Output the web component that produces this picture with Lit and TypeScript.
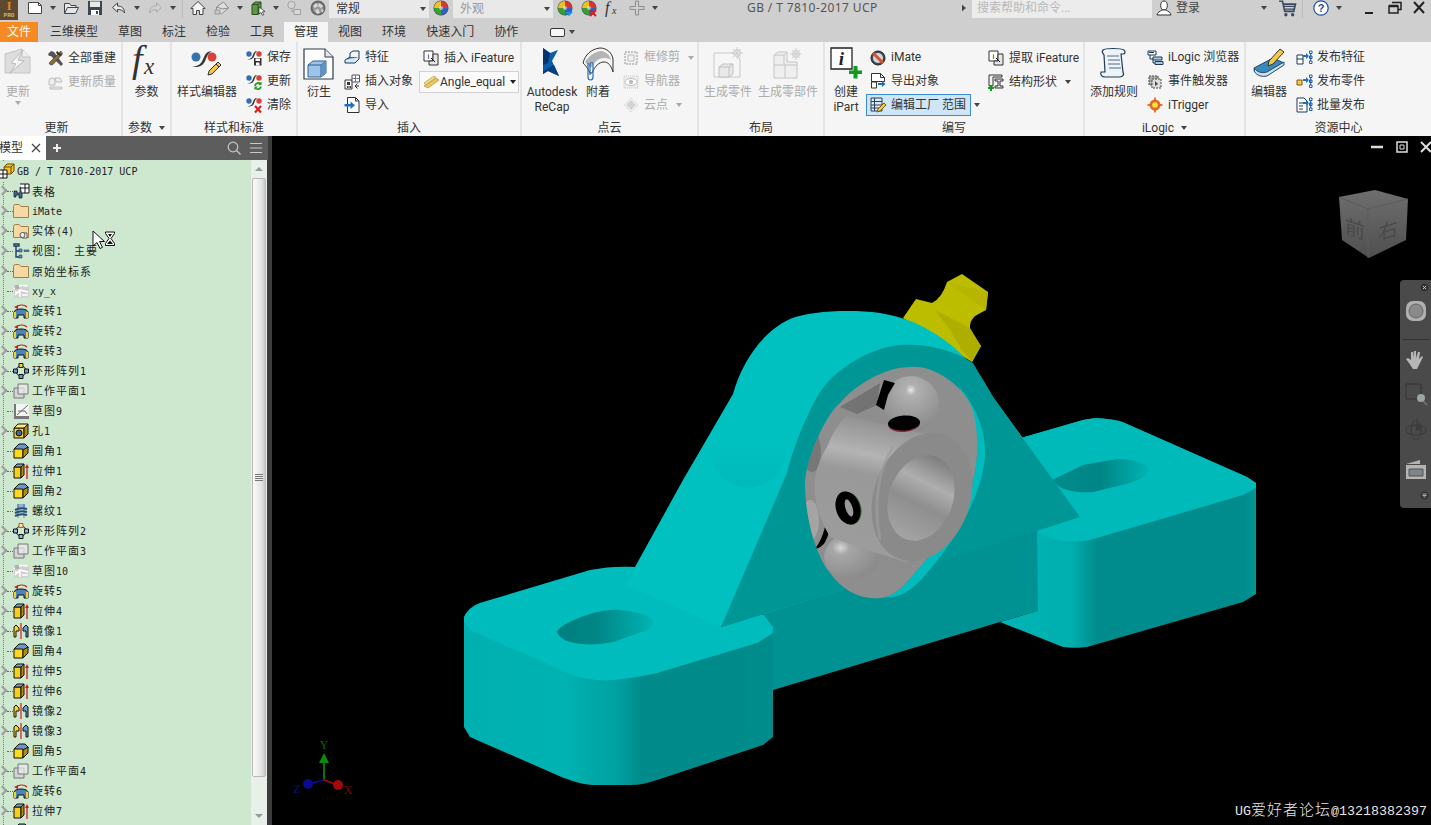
import { LitElement, html, css, svg } from 'lit';
import { customElement } from 'lit/decorators.js';

const ic = (body: unknown, size = 16, vb = 16) =>
  html`<svg class="ic" width=${size} height=${size} viewBox="0 0 ${vb} ${vb}">${body}</svg>`;

// title bar
const tDoc = svg`<path d="M1.500 2.500h10l3 3v8h-13z" fill="#fff" stroke="#444"/><path d="M11.500 2.500v3h3" fill="none" stroke="#444"/>`;
const tOpen = svg`<path d="M1.500 13.500v-10h5l1.500 2h5v2" fill="#e8e8e8" stroke="#444"/><path d="M1.500 13.500l3-6h11l-3 6z" fill="#dfe6ee" stroke="#444"/>`;
const tSave = svg`<path d="M1 1h14v14H1z" fill="#3c4650"/><path d="M3 1.500h10v5.500H3z" fill="#e9e9e9"/><path d="M4 10h8v5H4z" fill="#fff"/><path d="M9 11h2v3H9z" fill="#3c4650"/>`;
const tUndo = svg`<path d="M6.500 3L1.500 7.500l5 4.500V9.500c3.500 0 5.500 1 7 3.500 0-4.500-2.500-7-7-7z" fill="#e9e9e9" stroke="#444"/>`;
const tRedo = svg`<path d="M9.500 3l5 4.500-5 4.500V9.500c-3.500 0-5.500 1-7 3.500 0-4.500 2.500-7 7-7z" fill="#d4d4d4" stroke="#aaa"/>`;
const tHome = svg`<path d="M8 1.500L.8 8.500h2.200v6h3.500v-4h3v4H13v-6h2.200z" fill="#f2f2f2" stroke="#444"/>`;
const tMail = svg`<path d="M2.500 7l7-5 5 6-7 6-5-3z" fill="#ddd" stroke="#8a8a8a"/><path d="M2.500 7l6 2 6-1" fill="none" stroke="#8a8a8a"/><path d="M1 10h5v4H1z" fill="#c8c8c8" stroke="#999"/>`;
const tGreen = svg`<path d="M2 4.500L5 2h6v10l-3 2.500H2z" fill="#5d9a45" stroke="#2c4f22"/><path d="M2 4.500h6V14M8 4.500L11 2" fill="none" stroke="#2c4f22"/><path d="M9 7l6 4.500-2.700.400 1.500 2.800-1.400.7-1.400-2.900L9 14z" fill="#fff" stroke="#222" stroke-width=".7"/>`;
const tCircles = svg`<circle cx="5.500" cy="5" r="3.700" fill="#d4d4d4" stroke="#a0a0a0"/><path d="M8 9.500h6.500v5H8z" fill="#d8d8d8" stroke="#a0a0a0"/><path d="M6 8.500v3h2" fill="none" stroke="#a0a0a0"/>`;
const tBall = svg`<circle cx="8" cy="8" r="7.500" fill="#666"/><circle cx="8" cy="8" r="5.500" fill="#999"/><path d="M3 6l3-3 2 3-3 2zM9 3l4 3-2 2-3-2zM5 10l3-1 2 4-3 1zM11 9l3 1-2 3z" fill="#d8d8d8"/>`;
const tColor = svg`<circle cx="8" cy="8" r="7.500" fill="#444"/><path d="M8 1a7 7 0 0 1 7 7H8z" fill="#d33"/><path d="M15 8a7 7 0 0 1-7 7V8z" fill="#2b62c4"/><path d="M8 15a7 7 0 0 1-7-7h7z" fill="#3a9d3a"/><path d="M1 8a7 7 0 0 1 7-7v7z" fill="#f0c020"/><circle cx="8" cy="8" r="2" fill="#eee" opacity=".6"/>`;
const tPlus = svg`<path d="M6.500 1h3v5.500H15v3H9.500V15h-3V9.500H1v-3h5.500z" fill="#cfcfcf" stroke="#8d8d8d"/>`;
const tUser = svg`<ellipse cx="8" cy="5.500" rx="3.300" ry="4.500" fill="#fff" stroke="#333"/><path d="M1 15c.5-3 3-3.500 5-5h4c2 1.500 4.500 2 5 5z" fill="#fff" stroke="#333"/>`;
const tCart = svg`<path d="M1 2h3l2 9h8l1.500-6.500H4.500" fill="none" stroke="#3b4c60" stroke-width="1.500"/><path d="M5 6.500h10M5.500 9h9" stroke="#3b4c60"/><circle cx="7" cy="14" r="1.500" fill="#3b4c60"/><circle cx="13" cy="14" r="1.500" fill="#3b4c60"/>`;
const tHelp = svg`<circle cx="8" cy="8" r="7.200" fill="#fff" stroke="#1c4f9c" stroke-width="1.200"/><text x="8" y="12" text-anchor="middle" font-size="11" font-weight="700" font-family="Liberation Sans" fill="#1c4f9c">?</text>`;
const tFx = svg`<text x="0" y="13" font-family="Liberation Serif" font-style="italic" font-size="16" fill="#333">f</text><text x="7" y="14" font-family="Liberation Serif" font-style="italic" font-size="10" fill="#333">x</text>`;

// ribbon, large
const rUpdate = svg`<path d="M3 7l17-5 8 8v16H3z" fill="#ddd" stroke="#c4c4c4"/><path d="M20 2v8h8" fill="#eee" stroke="#c4c4c4"/><path d="M21 3L9 16l5 1-6 9 14-12-6-1z" fill="#f4f4f4" stroke="#bbb"/>`;
const rFx = svg`<text x="1" y="25" font-family="Liberation Serif" font-style="italic" font-size="38" fill="#333">f</text><text x="13" y="27" font-family="Liberation Serif" font-style="italic" font-size="23" fill="#333">x</text>`;
const rStyle = svg`<circle cx="5" cy="10" r="4.500" fill="#3573b0"/><circle cx="21" cy="10" r="4.500" fill="#d8403a"/><path d="M1 19c8 1 10-4 12-9 1.500-4 4-6 8-6-4 2-5 5-6.500 9S9 22 1 19z" fill="#333"/><path d="M17 28l1-4 9-9 3 3-9 9z" fill="#f3c64a" stroke="#333"/><path d="M25 17l3 3" stroke="#333"/>`;
const rDerive = svg`<path d="M1 2h21l8 8v22H1z" fill="#fff" stroke="#2c3a48" stroke-width="1.200"/><path d="M22 2v8h8" fill="#e6e6e6" stroke="#2c3a48"/><path d="M5 18l5-4h13v12l-5 4H5z" fill="#9cc3ea" stroke="#2f5f90"/><path d="M5 18h13v12M18 18l5-4" fill="none" stroke="#2f5f90"/><path d="M18 18l5-4v12l-5 4z" fill="#5f93c8"/>`;
const rRecap = svg`<path d="M7 1l7 5 8-3-6 11 7 15-11-5-5 3z" fill="#0b5ea8"/><path d="M7 1l7 5-2 10-5 2z" fill="#04356e"/><path d="M7 24l11-6 5 11-11-5-5 3z" fill="#063f7d"/>`;
const rAttach = svg`<path d="M1 16C3 8 9 2 18 1c7 0 12 5 13 11v13c-2-7-5-10-9-10-5 0-9 4-12 11H8C6 21 3 18 1 16z" fill="#f5f5f5" stroke="#333"/><path d="M3 15c4-6 10-11 17-11 4 1 8 4 9 9-3-2-5-2-8-2-6 1-9 5-12 10z" fill="#999" opacity=".7"/><path d="M6 16v14c0 4 5 4 5 0V17c0-2-3-2-3 0v11" fill="none" stroke="#2c6cb0" stroke-width="1.200"/>`;
const rGenPart = svg`<path d="M2 6h20l6 6v18H2z" fill="#f6f6f6" stroke="#c8c8c8"/><path d="M7 20l4-3h10v10l-4 3H7z" fill="#e9e9e9" stroke="#c0c0c0"/><path d="M7 20h10v10M17 20l4-3" fill="none" stroke="#c0c0c0"/><circle cx="25" cy="6" r="3.500" fill="#eee" stroke="#c8c8c8"/><path d="M25 0v12M19 6h12M21 2l8 8M29 2l-8 8" stroke="#d0d0d0"/>`;
const rGenComp = svg`<path d="M2 8l4-3h9v10h10v16H2z" fill="#efefef" stroke="#c4c4c4"/><path d="M2 8h10v10M2 18h11v13M13 18h12M12 8l3-3" fill="none" stroke="#c4c4c4"/><circle cx="24" cy="7" r="3.500" fill="#eee" stroke="#c8c8c8"/><path d="M24 1v12M18 7h12M20 3l8 8M28 3l-8 8" stroke="#d0d0d0"/>`;
const rIPart = svg`<path d="M1 1h21v21H1z" fill="#fff" stroke="#222" stroke-width="1.300"/><text x="11.500" y="18" text-anchor="middle" font-family="Liberation Serif" font-style="italic" font-weight="700" font-size="19" fill="#222">i</text><path d="M23.500 19h4v4.500H32v3.500h-4.500v4.500h-4V27H19v-3.500h4.500z" fill="#0d9a1e"/>`;
const rScroll = svg`<path d="M5 3c2-2 18-2 21 0 2 2 1 4-1 4h-2l2 18c2 4-2 5-4 5H7c-3 0-5-2-4-5h4L6 8C5 6 3 5 5 3z" fill="#eef3f7" stroke="#1f3c58" stroke-width="1.200"/><path d="M9 9h12M10 13h12M10 17h12M11 21h12" stroke="#4d6a85"/>`;
const rBook = svg`<path d="M1 21L20 11l11 5-17 12H8c-4 0-7-3-7-7z" fill="#3a89bb" stroke="#1e4a68"/><path d="M2 22c3 4 8 4 12 3l17-10v3L14 29c-5 1-10 0-13-5z" fill="#cfe0ea" stroke="#1e4a68"/><path d="M15 19l1-5L27 2l4 3-11 12z" fill="#f2c94c" stroke="#333"/>`;

// ribbon, small
const styleBase = svg`<circle cx="3" cy="4" r="2.700" fill="#2f6eb0"/><circle cx="13" cy="4" r="2.700" fill="#d8403a"/><path d="M1 9c5 .5 5.500-3 6.500-5.500C8.300 1.500 10 1 11 1c-2 1.500-2 3-3 5.500C7 9 4 10 1 9z" fill="#333"/>`;
const sSave = svg`${styleBase}<path d="M8 8h7.500v7.500H8z" fill="#333"/><path d="M9.500 8.500h4.500v2.500H9.500zM10 12.500h3.500v3H10z" fill="#fff"/>`;
const sRefresh = svg`${styleBase}<path d="M9 12a3.500 3.500 0 0 1 6-2M15 12.500a3.500 3.500 0 0 1-6 1.500" fill="none" stroke="#2a9a2a" stroke-width="1.700"/><path d="M15.500 7.500v3.500h-3.500zM8.500 16v-3.500H12z" fill="#2a9a2a"/>`;
const sClear = svg`${styleBase}<path d="M9 9l6 6.500M15 9l-6 6.500" stroke="#d81f1f" stroke-width="2.200"/>`;
const sTools = svg`<path d="M1 4l3-3 3 1 9 12-2 2L4 6 2 6z" fill="#555"/><path d="M14 1l1.500 3L6 14.500 3.500 15 2 13l9-9z" fill="#8a6a3a" stroke="#333" stroke-width=".6"/><path d="M10 1l5 4-2 1-4-3z" fill="#333"/>`;
const sScale = svg`<path d="M2 7a3 3 0 0 1 6 0v4H2z" fill="#eee" stroke="#bcbcbc"/><path d="M8 4h5l2 4H9zM3 13h12v2H3z" fill="#eee" stroke="#bcbcbc"/>`;
const sFeature = svg`<path d="M1 10l5-3h9l-4 4H2z" fill="#5b9dd0" stroke="#153d60"/><path d="M1 10v3h10l4-4V7" fill="#dbe8f2" stroke="#153d60"/><path d="M6 7V3l3-2h6v6" fill="#f4f4f4" stroke="#153d60"/>`;
const sObject = svg`<path d="M1 6h7v9H1z" fill="#fff" stroke="#333"/><path d="M3 8h3v3H3zM3 12h1.500v2H3zM5.500 12H7v2H5.500z" fill="#333"/><path d="M8 1h7.500v7H8z" fill="#fff" stroke="#555"/><path d="M8 4.500h7.500M11.500 1v7" stroke="#777"/><path d="M11 12h4M13.500 9.500L11 12l2.500 2.500" fill="none" stroke="#333"/>`;
const sImport = svg`<path d="M3.500.500h8l3.500 3.500v11.500H3.500z" fill="#fff" stroke="#333"/><path d="M11.500.500v3.500H15" fill="none" stroke="#333"/><path d="M.500 7h6V4.500l4.500 3.800-4.500 3.700V9.500h-6z" fill="#1d6fc2"/>`;
const sIFeat = svg`<path d="M1 1h9v10H1z" fill="#fff" stroke="#333"/><text x="5.500" y="8.500" text-anchor="middle" font-family="Liberation Sans" font-size="8" fill="#222">i</text><path d="M10 4h5v11H6v-4h4z" fill="#e6e6e6" stroke="#333"/><path d="M8 8l4 4" stroke="#111"/>`;
const sAngle = svg`<path d="M1 12L13 4l3 2L5 14z" fill="#e9c75c" stroke="#b8912c" stroke-width=".7"/><path d="M1 9L11 2l2 1.500L3 11z" fill="#f3dd8c" stroke="#b8912c" stroke-width=".7"/>`;
const sCrop = svg`<path d="M2 2h12v12H2z" fill="#f1f1f1" stroke="#c4c4c4" stroke-dasharray="2 1" stroke-width="2"/><path d="M5 5h6v6H5z" fill="none" stroke="#bcbcbc"/>`;
const sNav = svg`<path d="M1 2h14v12H1z" fill="#ececec" stroke="#c8c8c8" stroke-dasharray="1 1"/><ellipse cx="8" cy="8" rx="6" ry="3.500" fill="#fff" stroke="#bdbdbd"/><circle cx="8" cy="8" r="2.200" fill="#bdbdbd"/>`;
const sCloud = svg`<path d="M8 1l7 7-7 7-7-7z" fill="#ececec" stroke="#d0d0d0" stroke-dasharray="1 1"/><path d="M8 4l4 4-4 4-4-4z" fill="#d4d4d4" stroke="#bdbdbd" stroke-dasharray="1 1"/>`;
const sIMate = svg`<circle cx="8" cy="8" r="7" fill="#3d4b57" stroke="#222"/><circle cx="8" cy="8" r="5" fill="#cfd6dc"/><path d="M3 3l10 10" stroke="#d8502c" stroke-width="3"/>`;
const sExport = svg`<path d="M1.500.500h9l4 4v4h-13z" fill="#fff" stroke="#333"/><path d="M10.500.500v4h4" fill="none" stroke="#333"/><path d="M1.500 9h5v6h-5z" fill="#fff" stroke="#333"/><path d="M8 10h4V8l3.500 3-3.500 3v-2H8z" fill="#1d6fc2"/>`;
const sFactory = svg`<path d="M1 1h11v13H1z" fill="#dfe9f3" stroke="#263f5a"/><path d="M1 4.500h11M1 8h11M1 11h11M4.500 1v13" stroke="#263f5a"/><path d="M7 15l1-3 6-6 2 2-6 6z" fill="#f2c94c" stroke="#7a5a10"/>`;
const sStruct = svg`<path d="M1 1h13v2H5v9H1z" fill="#f0f0f0" stroke="#333"/><path d="M7 5h8v2h-3v5h3v2H7v-2h3V7H7z" fill="#e4e4e4" stroke="#333"/><path d="M0 13h2v-2h2v2h2v2H4v2H2v-2H0z" fill="#0d9a1e"/>`;
const sLogicB = svg`<path d="M1 1h8v4H1z" fill="#fff" stroke="#1c3b5a"/><path d="M3 5v4h3v4h2" fill="none" stroke="#1c3b5a"/><path d="M6 7h9v3H6zM8 11.500h8v3H8z" fill="#a9cbe7" stroke="#1c3b5a"/><path d="M2 2.500h5" stroke="#1c3b5a"/>`;
const sEvent = svg`<path d="M2 2h9v9H2z" fill="#aaa" stroke="#444" stroke-dasharray="2 1"/><path d="M5 5h9v9H5z" fill="#ddd" stroke="#444" stroke-dasharray="2 1"/><path d="M8 7v5l3-2z" fill="#444"/>`;
const sTrigger = svg`<circle cx="8" cy="8" r="5.500" fill="#e86a1d"/><circle cx="8" cy="8" r="2.800" fill="#ffe14a"/><path d="M8 .500v3M8 12.500v3M.500 8h3M12.500 8h3" stroke="#c8561a" stroke-width="1.500"/>`;
const pubPart = (left: unknown) => svg`${left}<path d="M7 5h3V3l3 3-3 3V7H7z" fill="#1d6fc2"/><path d="M13.500 1h2.500v2.500h-2.500zM13.500 6h2.500v2.500h-2.500zM13.500 11h2.500v2.500h-2.500z" fill="#fff" stroke="#1d5ea8"/><path d="M14.700 3.500V11" stroke="#1d5ea8"/>`;
const sPubF = pubPart(svg`<path d="M1 5h6v9H1z" fill="#fff" stroke="#1c3b5a"/><path d="M1 9h6" stroke="#1c3b5a"/>`);
const sPubP = pubPart(svg`<path d="M1 6h5v5H1z" fill="#f2c94c" stroke="#7a5a10"/>`);
const sPubB = pubPart(svg`<path d="M1 1h7l3 3v11H1z" fill="#fff" stroke="#1c3b5a"/><path d="M3 6h4M3 9h4M3 12h4" stroke="#1c3b5a"/>`);

// tree
const yFace = svg`<path d="M1 5h10v10H1z" fill="#f7d52a" stroke="#111"/><path d="M1 5l4-4h10l-4 4z" fill="#ffe98a" stroke="#111"/><path d="M11 5l4-4v10l-4 4z" fill="#a98a10" stroke="#111"/>`;
const nRoot = svg`<path d="M5 4l3-3h7v7l-3 3H5z" fill="#f4c430" stroke="#6b4a00"/><path d="M5 4h7v7M12 4l3-3" fill="none" stroke="#6b4a00"/><path d="M0 7h8v8H0z" fill="#fff" stroke="#111"/><path d="M0 11h8M4 7v8" stroke="#111"/>`;
const nTable = svg`<path d="M1 8h3v2h3V4h2v11H6v-3H3v2H1z" fill="#3b6a99" stroke="#111" stroke-width=".7"/><path d="M7 1h9v9H9" fill="#fff" stroke="#111"/><path d="M12 1v9M7 5h9" stroke="#111"/>`;
const nFolder = svg`<path d="M.500 3.500q0-2 2-2h3.500l2 2h7q.500 0 .500 .500v10.500H.500z" fill="#f6d8a5" stroke="#a67c3f"/>`;
const nFolderS = svg`${nFolder}<path d="M9 10h5v5H9z" fill="#fff" stroke="#555"/><circle cx="9.500" cy="12" r="2.500" fill="#eee" stroke="#555"/>`;
const nView = svg`<path d="M1 1h5v2H1zM3 3v11h4M3 8h4" fill="none" stroke="#1a3d63" stroke-width="1.400"/><path d="M6 6h3v3H6zM6 12h3v3H6zM11 7h5v1.500h-5z" fill="#5a8fc0" stroke="#1a3d63" stroke-width=".6"/>`;
const nSketchG = svg`<path d="M1 2h15v13H1z" fill="#d0d0d0"/><path d="M1 6c4-4 8-4 14-3M2 12l5-5 8 2M2 9h5v5M9 12h6" fill="none" stroke="#fff" stroke-width="1.600"/><path d="M2 2h4v4H2z" fill="#b0b0b0"/>`;
const nRev = svg`<path d="M3 4.500C5 1.500 11 1 14 4" fill="none" stroke="#d61818" stroke-width="1.200"/><path d="M1 4l4-2v4z" fill="#d61818"/><path d="M1 10c0-3 3-4 7-4s7 1 7 4v5h-4v-3H5v3H1z" fill="#4f82b8" stroke="#111"/><path d="M13 9h2v6h-2zM1 9h2v6H1z" fill="#f0d030"/>`;
const nPattern = svg`<circle cx="8" cy="8" r="5" fill="none" stroke="#111"/><path d="M6 0.500h4v4H6z" fill="#f5d430" stroke="#111"/><path d="M0.500 6h4v4h-4zM11.500 6h4v4h-4zM6 11.500h4v4H6z" fill="#6b9bcc" stroke="#111"/>`;
const nPattern2 = svg`<circle cx="8" cy="8" r="5" fill="none" stroke="#111"/><path d="M6 0.500h4v4H6z" fill="#f6e3c0" stroke="#c05a10"/><path d="M0.500 6h4v4h-4zM11.500 6h4v4h-4zM6 11.500h4v4H6z" fill="#8fb6dc" stroke="#111"/>`;
const nPlane = svg`<path d="M1 5h10v10H1z" fill="#d4d4d4" stroke="#777"/><path d="M5 1h10v10H5z" fill="#ebebeb" fill-opacity=".7" stroke="#777"/>`;
const nSketch = svg`<path d="M1 1h15v14H1z" fill="#f4f4f4"/><path d="M1 13h15v3H1z" fill="#777"/><path d="M1 1h2v15H1z" fill="#777"/><path d="M4 12l11-10M5 8h7l2 3" fill="none" stroke="#666"/>`;
const nHole = svg`${yFace}<circle cx="6" cy="10" r="3" fill="#3b6a99" stroke="#111"/>`;
const nFillet = svg`<path d="M1 6l5-5h6l3 3v1l-5 2z" fill="#6f97c4" stroke="#111"/><path d="M1 6h9v9H1z" fill="#ffd91f" stroke="#111"/><path d="M10 7l5-3v6l-5 5z" fill="#b08f10" stroke="#111"/>`;
const nExtrude = svg`<path d="M1 4h7v11H1z" fill="#f7cd1e" stroke="#111"/><path d="M1 4l3-3h7L8 4z" fill="#7ca3cc" stroke="#111"/><path d="M8 4l3-3v11l-3 3z" fill="#b08f10" stroke="#111"/><path d="M14 16V4" stroke="#d61818" stroke-width="1.300"/><path d="M12 5l2-4 2 4z" fill="#d61818"/>`;
const nThread = svg`<path d="M4 1h8v5H4z" fill="#8fb1d0"/><path d="M2 7c4-2 8-2 12-1M2 10c4-2 8-2 12-1M2 13c4-2 8-2 12-1" fill="none" stroke="#1f4f80" stroke-width="2"/><path d="M5 1v14M11 1v14" stroke="#33475c" stroke-width=".6"/>`;
const nMirror = svg`<path d="M1 14V4l2-2 3 3v3H3v6z" fill="#f7d52a" stroke="#111"/><path d="M15 14V4l-2-2-3 3v3h3v6z" fill="#6b9bcc" stroke="#111"/><path d="M8 0v16" stroke="#d61818" stroke-width="1.200"/>`;

type Row = [typeof nFolder, string, boolean];
const rows: Row[] = [
  [nTable, '表格', true], [nFolder, 'iMate', true], [nFolderS, '实体(4)', true], [nView, '视图： 主要', true],
  [nFolder, '原始坐标系', true], [nSketchG, 'xy_x', false], [nRev, '旋转1', true], [nRev, '旋转2', true], [nRev, '旋转3', true],
  [nPattern, '环形阵列1', true], [nPlane, '工作平面1', true], [nSketch, '草图9', false], [nHole, '孔1', true],
  [nFillet, '圆角1', false], [nExtrude, '拉伸1', true], [nFillet, '圆角2', false], [nThread, '螺纹1', false],
  [nPattern2, '环形阵列2', true], [nPlane, '工作平面3', true], [nSketchG, '草图10', false], [nRev, '旋转5', true],
  [nExtrude, '拉伸4', true], [nMirror, '镜像1', true], [nFillet, '圆角4', false], [nExtrude, '拉伸5', true],
  [nExtrude, '拉伸6', true], [nMirror, '镜像2', true], [nMirror, '镜像3', true], [nFillet, '圆角5', false],
  [nPlane, '工作平面4', true], [nRev, '旋转6', true], [nExtrude, '拉伸7', true], [nFillet, '', false],
];

// latin runs use the narrower mono size, the rest stays CJK width
const runs = (s: string) => s.split(/([\x00-\x7f]+)/).map((p, i) => (i % 2 ? html`<span class="lat">${p}</span>` : p));

const big = (icon: unknown, lines: string[], cls: string, arrow = false) => html`<div class="big ${cls}">
  <div class="bigicon">${ic(icon, 32, 32)}</div>
  ${lines.map(l => html`<div class="bigtext">${l}</div>`)}
  ${arrow ? html`<i class="dd bigdd"></i>` : ''}
</div>`;

const small = (icon: unknown, label: string, cls = '', arrow = false) => html`<div class="row ${cls}">
  ${ic(icon)}<span>${label}</span>${arrow ? html`<i class="dd"></i>` : ''}
</div>`;

const panel = (cls: string, label: unknown, body: unknown) => html`<section class="panel ${cls}">
  <div class="body">${body}</div>
  <div class="label">${label}</div>
</section>`;

const silhouette = 'M805 483C806 460 825 415 840 403 855 385 885 367 910 367 935 365 960 385 970 403 978 420 980 455 973 480 965 510 945 540 920 567 905 585 895 597 880 598 860 600 842 590 830 573 815 555 805 515 805 483z';

const model = svg`
  <defs>
    <linearGradient id="fl" gradientUnits="userSpaceOnUse" x1="464" x2="773" y1="0" y2="0">
      <stop offset="0" stop-color="#00b0b0"/><stop offset=".33" stop-color="#00b2b2"/><stop offset=".5" stop-color="#00a0a0"/><stop offset=".58" stop-color="#008a8a"/><stop offset="1" stop-color="#008c8c"/>
    </linearGradient>
    <linearGradient id="fr" gradientUnits="userSpaceOnUse" x1="1037" x2="1256" y1="0" y2="0">
      <stop offset="0" stop-color="#00b2b2"/><stop offset=".16" stop-color="#00aeae"/><stop offset=".27" stop-color="#008c8c"/><stop offset=".95" stop-color="#008c8c"/><stop offset="1" stop-color="#009898"/>
    </linearGradient>
    <linearGradient id="h1" gradientUnits="userSpaceOnUse" x1="557" x2="653" y1="0" y2="0">
      <stop offset="0" stop-color="#007f7f"/><stop offset=".4" stop-color="#008585"/><stop offset="1" stop-color="#00b4b4"/>
    </linearGradient>
    <linearGradient id="h2" gradientUnits="userSpaceOnUse" x1="1052" x2="1149" y1="0" y2="0">
      <stop offset="0" stop-color="#008c8c"/><stop offset=".5" stop-color="#008585"/><stop offset="1" stop-color="#00b4b4"/>
    </linearGradient>
    <linearGradient id="fillet" x1="0" y1="0" x2="0" y2="1">
      <stop offset=".4" stop-color="#00c0c0"/><stop offset="1" stop-color="#00baba"/>
    </linearGradient>
    <linearGradient id="cyl" gradientUnits="userSpaceOnUse" x1="856" y1="412" x2="830" y2="540">
      <stop offset="0" stop-color="#8e8e8e"/><stop offset=".2" stop-color="#a6a6a6"/><stop offset=".3" stop-color="#b4b4b4"/><stop offset=".45" stop-color="#999"/><stop offset="1" stop-color="#9c9c9c"/>
    </linearGradient>
    <linearGradient id="bore" gradientUnits="userSpaceOnUse" x1="925" y1="455" x2="915" y2="545">
      <stop offset="0" stop-color="#7e7e7e"/><stop offset=".3" stop-color="#aeaeae"/><stop offset=".55" stop-color="#8e8e8e"/><stop offset="1" stop-color="#a6a6a6"/>
    </linearGradient>
    <radialGradient id="ball" cx=".5" cy=".25" r=".7">
      <stop offset="0" stop-color="#e8e8e8"/><stop offset=".14" stop-color="#b0b0b0"/><stop offset="1" stop-color="#8c8c8c"/>
    </radialGradient>
    <radialGradient id="ball2" cx=".3" cy=".3" r=".7">
      <stop offset="0" stop-color="#d8d8d8"/><stop offset=".22" stop-color="#a6a6a6"/><stop offset="1" stop-color="#8c8c8c"/>
    </radialGradient>
    <clipPath id="holeclip"><path d=${silhouette}/></clipPath>
  </defs>

  <path d="M903 318L916 299 932 303Q942 298 947 282L962 274 988 292 986 310 975 316Q966 325 973 335L981 346 972 362 945 345z" fill="#bdbd00"/>
  <path d="M947 282L988 292 986 310 972 300z" fill="#b6b600"/>
  <path d="M935 310L970 328 981 346 972 362 962 350 950 330z" fill="#aeae00"/>

  <path d="M1021 438L1083 420C1092 418 1100 418 1107 419 1115 420 1121 421 1127 424L1247 477 1256 483 1256 594 1243 602 1087 647C1080 648 1070 648 1063 647L1000 622 1037 611 1037 531z" fill="url(#fr)"/>
  <path d="M1021 438L1083 420C1092 418 1100 418 1107 419 1115 420 1121 421 1127 424L1247 477 1256 483 1256 488 1243 495 1090 540C1080 542 1070 542 1063 541 1055 540 1045 537 1037 531L1000 470z" fill="#00baba"/>
  <path d="M1052 480L1083 465 1117 459C1135 459 1149 464 1149 471 1145 477 1138 480 1130 483L1093 492C1080 493 1060 492 1052 480z" fill="url(#h2)"/>

  <path d="M763 610L1037 527 1038 611 1000 622 773 690z" fill="#009292"/>

  <path d="M464 619L773 630 773 737 763 745 657 780C648 783 640 785 630 785L593 785C585 785 570 781 557 775L470 737 464 727z" fill="url(#fl)"/>
  <path d="M464 617C468 608 476 604 483 602L590 570C605 567 620 566 635 567L700 600 721 627 763 614 773 627 773 633 757 643 657 673C645 676 630 678 613 680 605 681 590 680 580 677 575 676 565 673 557 668L470 630 464 622z" fill="#00bcbc"/>
  <path d="M557 632C560 625 575 619 593 613 605 610 615 609 620 610 640 612 653 616 653 622 653 626 650 628 647 630L613 642C603 644 590 645 583 644 570 643 560 640 557 632z" fill="url(#h1)"/>

  <path d="M635 567L683 480 733 394C742 362 762 332 790 319 810 311 850 309 880 313 892 315 903 318 913 322 947 337 970 360 983 380L993 397 1080 517 721 627 626 585z" fill="#00c0c0"/>
  <ellipse cx="748" cy="450" rx="38" ry="38" fill="url(#fillet)"/>
  <path d="M721 627L787 473C795 440 815 395 827 383 845 363 875 347 900 345 925 343 955 350 973 363L993 397 1080 517 1037 531 763 614z" fill="#009696"/>

  <path d="M958 385C975 405 986 430 985 453 984 490 960 535 927 573 915 587 905 595 893 597L880 598C895 597 905 585 920 567 945 540 965 510 973 480 980 455 978 420 958 385z" fill="#00bcbc"/>
  <path d=${silhouette} fill="#8e8e8e"/>
  <g clip-path="url(#holeclip)">
    <path d="M840 407L880 383 877 405 857 414z" fill="#737373"/>
    <circle cx="911" cy="404" r="28" fill="url(#ball)"/>
    <ellipse cx="852" cy="557" rx="28" ry="23" fill="url(#ball2)"/>
    <ellipse cx="812" cy="452" rx="9" ry="20" fill="#777"/>
    <ellipse cx="810" cy="520" rx="9" ry="20" fill="#a4a4a4"/>
    <path d="M884 380L895 383 888 395 884 410 876 405z" fill="#000"/>
    <path d="M825 527C830 528 830 532 826 540 824 545 820 548 815 549 820 542 823 535 825 527z" fill="#000"/>
    <path d="M815 480C816 470 820 458 827 447 832 435 838 422 848 416L940 437 907 562 877 553 830 537C820 520 813 500 815 480z" fill="url(#cyl)"/>
  </g>
  <ellipse cx="922" cy="497" rx="48" ry="66" transform="rotate(20 922 497)" fill="#8a8a8a"/>
  <path d="M893 447C878 470 873 505 880 540" fill="none" stroke="#9c9c9c" stroke-width="3" opacity=".7"/>
  <ellipse cx="921" cy="498" rx="32" ry="44" transform="rotate(20 921 498)" fill="url(#bore)"/>
  <ellipse cx="904" cy="424" rx="16" ry="8" transform="rotate(-4 904 424)" fill="#7c2a3c"/>
  <ellipse cx="904" cy="423" rx="16" ry="7.500" transform="rotate(-4 904 423)" fill="#000"/>
  <ellipse cx="849" cy="508" rx="12" ry="17" transform="rotate(-18 849 508)" fill="#3a6a3a"/>
  <ellipse cx="848" cy="508" rx="12" ry="17" transform="rotate(-18 848 508)" fill="#000"/>
  <ellipse cx="849" cy="508" rx="3.500" ry="9" transform="rotate(-18 849 508)" fill="#9a9a9a"/>

  <path d="M324 780V762" stroke="#0c9a0c" stroke-width="1.500"/>
  <path d="M319 763h10l-5-10z" fill="#0c8a0c"/>
  <path d="M324 780l-16 4" stroke="#0a0a9a" stroke-width="1.500"/>
  <circle cx="308" cy="784" r="5" fill="#0a0a90"/>
  <path d="M324 780l14 5" stroke="#a00a0a" stroke-width="1.500"/>
  <circle cx="338" cy="785" r="5" fill="#a00a0a"/>
  <text x="324" y="749" text-anchor="middle" class="axis" fill="#0a6a0a">Y</text>
  <text x="297" y="793" text-anchor="middle" class="axis" fill="#0a0a80">Z</text>
  <text x="348" y="794" text-anchor="middle" class="axis" fill="#7a0a0a">X</text>
`;

@customElement('app-root')
export class AppRoot extends LitElement {
  static styles = css`
    :host {
      display: block;
      width: 1431px;
      height: 825px;
      overflow: hidden;
      background: #000;
      font: 12px/15px Roboto, 'Noto Sans CJK SC', sans-serif;
      color: #333;
    }
    .ic { display: block; flex: none; overflow: visible; }
    .dd {
      display: inline-block;
      flex: none;
      width: 0;
      height: 0;
      border: 3.500px solid transparent;
      border-top: 4px solid #444;
      border-bottom: 0;
    }

    .titlebar { display: flex; align-items: flex-start; height: 22px; background: #cfcfcf; }
    .logo {
      width: 18px; height: 20px; margin-right: 5px; background: #5c4a30; color: #e8861a;
      display: flex; flex-direction: column; align-items: center; overflow: hidden; flex: none;
      font: 700 12px/12px 'Liberation Serif', serif;
    }
    .logo small { font: 700 6px/7px 'Liberation Mono', monospace; color: #c9b48a; }
    .b { width: 24px; height: 16px; display: flex; align-items: center; justify-content: center; flex: none; }
    .d { width: 12px; height: 16px; display: flex; align-items: center; justify-content: center; flex: none; }
    .tsep { width: 7px; height: 18px; flex: none; display: flex; justify-content: center; }
    .tsep::after { content: ''; width: 1px; background: #bcbcbc; }
    .sel {
      flex: none; height: 18px; background: #e9e9e9; display: flex; align-items: center;
      justify-content: space-between; padding: 0 3px 0 7px; box-sizing: border-box; width: 100px; margin-left: -1px;
    }
    .sel.appearance { margin-left: 0; color: #9a9a9a; }
    .title {
      width: 213px; padding-left: 86px; flex: none; color: #555; white-space: nowrap;
      font-family: 'Noto Sans', sans-serif; letter-spacing: .4px; line-height: 16px;
    }
    .search { width: 180px; height: 18px; flex: none; background: #ececec; color: #b8b8b8; line-height: 17px; padding-left: 5px; box-sizing: border-box; }
    .login { width: 82px; flex: none; color: #444; line-height: 16px; }
    .cart { margin-left: 5px; }
    .help { margin-left: 3px; }
    .win { margin-left: auto; display: flex; }

    .tabs { display: flex; height: 20px; background: #cfcfcf; line-height: 21px; }
    .tab { padding: 0 10px; }
    .tab.file { width: 38px; padding: 0; margin-right: 2px; text-align: center; background: #f58a24; color: #fff; }
    .tab.on { background: #f5f5f5; }
    .tabdd { margin-left: 22px; display: flex; align-items: center; gap: 4px; }
    .pill { width: 13px; height: 7px; border: 1px solid #333; border-radius: 2px; background: #f5f5f5; }

    .ribbon {
      display: grid; height: 94px; background: #f5f5f5;
      grid-template-columns: 123px 49px 126px 224px 177px 126px 260px 161px 1fr;
    }
    .panel { display: flex; flex-direction: column; box-sizing: border-box; border-right: 2px solid #e4e4e4; }
    .panel:last-child { border-right: 0; }
    .body { height: 75px; padding-top: 4px; box-sizing: border-box; display: flex; }
    .label { height: 19px; padding-top: 3px; box-sizing: border-box; line-height: 16px; text-align: center; display: flex; justify-content: center; align-items: center; gap: 7px; }
    .p1 .body { gap: 11px; }
    .p1 .label { padding-right: 8px; }
    .p2 .body { justify-content: center; }
    .p3 .body, .p4 .body, .p8 .body, .p9 .body { padding-left: 5px; gap: 9px; }
    .p4 .col.c66 { width: 66px; }
    .p5 .body { padding-left: 5px; gap: 3px; }
    .p5 .col { margin-left: 4px; }
    .p6 .body { padding-left: 5px; gap: 6px; }
    .p7 .body { padding-left: 6px; gap: 5px; }

    .big { display: flex; flex-direction: column; align-items: center; flex: none; white-space: nowrap; padding-top: 1px; }
    .bigicon { height: 38px; display: flex; justify-content: center; }
    .bigtext { line-height: 15px; }
    .bigdd { margin-top: 1px; }
    .w30 { width: 30px; } .w32 { width: 32px; } .w36 { width: 36px; }
    .w48 { width: 48px; } .w50 { width: 50px; } .w60 { width: 60px; }
    .off { color: #ababab; }
    .off .dd { border-top-color: #aaa; }

    .col { display: flex; flex-direction: column; flex: none; }
    .col.c117 { width: 117px; }
    .row { height: 24px; display: flex; align-items: center; gap: 5px; white-space: nowrap; }
    .row.ind { padding-left: 4px; }
    .row .dd { margin-left: 3px; }
    .combo {
      width: 100px; height: 22px; margin: 1px 0; box-sizing: border-box; background: #fafafa; border: 1px solid #d2d2d2;
      display: flex; align-items: center; gap: 1px; padding-left: 3px; white-space: nowrap;
    }
    .combo .dd { margin-left: 4px; border-top-color: #222; }
    .hlwrap { display: flex; align-items: center; gap: 3px; }
    .hl {
      width: 105px; height: 22px; margin: 1px 0; box-sizing: border-box; padding-left: 3px;
      background: #cfe5f8; border: 1px solid #3a8ad6;
    }

    .main { display: flex; height: 689px; }
    .browser { width: 272px; flex: none; display: flex; flex-direction: column; position: relative; background: #3c3c3c; overflow: hidden; }
    .bhead { height: 24px; width: 268px; flex: none; background: #5d5d5d; display: flex; align-items: center; padding-right: 1px; box-sizing: border-box; }
    .btab { width: 46px; height: 24px; background: #fff; display: flex; align-items: center; overflow: hidden; flex: none; }
    .btab span { margin-left: -1px; width: 29px; flex: none; color: #333; }
    .bsearch { margin-left: auto; }
    .bhead .b { width: 22px; }
    .tree { flex: 1; width: 267px; display: flex; background: #cde8cf; min-height: 0; }
    .list {
      flex: 1; overflow: hidden; padding-top: 1px; color: #222;
      font: 11px/20px 'Noto Sans CJK SC', sans-serif; letter-spacing: 1px;
      background-image: linear-gradient(#777 50%, transparent 50%);
      background-size: 1px 2px; background-repeat: repeat-y; background-position: 3px 0;
    }
    .lat { font: 10px/20px 'DejaVu Sans Mono', monospace; letter-spacing: 0; }
    .node { height: 20px; display: flex; align-items: center; white-space: nowrap; }
    .node .label-t { margin-left: 3px; }
    .node.root { background: #cde8cf; }
    .node.root .ic { margin-left: -1px; }
    .node.root .label-t { margin-left: 2px; }
    .hook { width: 13px; flex: none; height: 20px; position: relative; display: flex; align-items: center; }
    .hook::after { content: ''; width: 6px; margin-left: 7px; border-top: 1px dotted #666; }
    .chev {
      position: absolute; left: -1px; top: 6px; width: 5px; height: 5px;
      border: solid #9c9c9c; border-width: 2px 2px 0 0; transform: rotate(45deg); background: #cde8cf;
    }
    .sb { width: 16px; flex: none; background: #e9efe9; display: flex; flex-direction: column; align-items: center; }
    .sbarrow { height: 18px; flex: none; display: flex; align-items: center; justify-content: center; }
    .up { width: 0; height: 0; border: 4px solid transparent; border-bottom: 4px solid #999; border-top: 0; }
    .down { width: 0; height: 0; border: 4px solid transparent; border-top: 4px solid #999; border-bottom: 0; }
    .thumb {
      width: 14px; height: 599px; flex: none; box-sizing: border-box; border: 1px solid #b8b8b8; border-radius: 2px;
      background: linear-gradient(90deg, #fafafa, #e4e4e4 70%, #c8c8c8);
      display: flex; align-items: center; justify-content: center;
    }
    .grip { width: 8px; height: 7px; background: repeating-linear-gradient(#777 0 1px, #eee 1px 2px); }
    .sbspace { flex: 1; }
    .cursor { position: absolute; left: 92px; top: 94px; }

    .view { flex: 1; position: relative; background: #000; overflow: hidden; }
    .model { display: block; }
    .axis { font: 12px 'Liberation Serif', serif; }
    .vctl { position: absolute; right: -7px; top: 3px; display: flex; }
    .cube { position: absolute; left: 1066px; top: 53px; }
    .cubetxt { font: 20px 'Noto Sans CJK SC', sans-serif; fill: #4a4a4a; }
    .nav {
      position: absolute; right: 0; top: 144px; width: 31px; height: 228px; box-sizing: border-box;
      background: #4a4a4a; border-radius: 4px 0 0 4px; display: flex; flex-direction: column; align-items: center;
      padding-top: 3px;
    }
    .nav-x { align-self: flex-end; margin-right: 2px; }
    .nav-wheel { margin-top: 8px; }
    .nav-line { width: 26px; height: 1px; background: #333; margin: 17px 0 10px; flex: none; }
    .nav-zoom { margin-top: 11px; }
    .nav-orbit { margin-top: 14px; }
    .nav-film { margin-top: 18px; }
    .nav-bot { align-self: flex-end; margin: 10px 2px 0 0; }
    .mark {
      position: absolute; right: 4px; bottom: 3px; color: #e6e6e6; white-space: nowrap;
      font: 15px/20px 'Noto Sans CJK SC', sans-serif; letter-spacing: 1px; font-weight: 300;
    }
    .mark .lat { font: 13.340px/20px 'Liberation Mono', monospace; letter-spacing: 0; }
  `;

  render() {
    return html`
      <header class="titlebar">
        <div class="logo">I<small>PRO</small></div>
        <div class="b">${ic(tDoc)}</div><div class="d"><i class="dd"></i></div>
        <div class="b">${ic(tOpen)}</div><div class="b">${ic(tSave)}</div><div class="b">${ic(tUndo)}</div>
        <div class="d"><i class="dd"></i></div><div class="b">${ic(tRedo)}</div><div class="d"><i class="dd"></i></div>
        <div class="tsep"></div>
        <div class="b">${ic(tHome)}</div><div class="b">${ic(tMail)}</div><div class="d"><i class="dd"></i></div>
        <div class="b">${ic(tGreen)}</div><div class="d"><i class="dd"></i></div>
        <div class="b">${ic(tCircles)}</div><div class="b">${ic(tBall)}</div>
        <div class="sel"><span>常规</span><i class="dd"></i></div>
        <div class="b">${ic(tColor)}</div>
        <div class="sel appearance"><span>外观</span><i class="dd"></i></div>
        <div class="b">${ic(svg`${tColor}<path d="M8 12h8l-4 4z" fill="#1d8fe0"/>`)}</div>
        <div class="b">${ic(svg`${tColor}<path d="M9 10l6 6M15 10l-6 6" stroke="#d81f1f" stroke-width="2"/>`)}</div>
        <div class="b">${ic(tFx)}</div>
        <div class="b">${ic(tPlus)}</div>
        <div class="d"><i class="dd"></i></div>
        <div class="title">GB / T 7810-2017 UCP</div>
        <div class="d">${ic(svg`<path d="M0 1l5 4-5 4z" fill="#444"/>`, 8, 10)}</div>
        <div class="search">搜索帮助和命令...</div>
        <div class="b">${ic(tUser)}</div>
        <div class="login">登录</div>
        <div class="d"><i class="dd"></i></div>
        <div class="b cart">${ic(tCart, 18)}</div>
        <div class="tsep"></div>
        <div class="b help">${ic(tHelp)}</div>
        <div class="d"><i class="dd"></i></div>
        <div class="win">
          <div class="b">${ic(svg`<path d="M2 13h8" stroke="#222" stroke-width="2"/>`)}</div>
          <div class="b">${ic(svg`<path d="M5 2.500h9v7h-3M2 6h9v7H2z" fill="none" stroke="#222" stroke-width="1.500"/><path d="M2 6h9" stroke="#222" stroke-width="2.500"/>`)}</div>
          <div class="b">${ic(svg`<path d="M3 2l10 11M13 2L3 13" stroke="#222" stroke-width="2"/>`)}</div>
        </div>
      </header>

      <nav class="tabs">
        <div class="tab file">文件</div>
        ${['三维模型', '草图', '标注', '检验', '工具'].map(t => html`<div class="tab">${t}</div>`)}
        <div class="tab on">管理</div>
        ${['视图', '环境', '快速入门', '协作'].map(t => html`<div class="tab">${t}</div>`)}
        <div class="tabdd"><div class="pill"></div><i class="dd"></i></div>
      </nav>

      <div class="ribbon">
        ${panel('p1', '更新', html`
          <div class="off">${big(rUpdate, ['更新'], 'w36', true)}</div>
          <div class="col">
            ${small(sTools, '全部重建')}
            <div class="off">${small(sScale, '更新质量')}</div>
          </div>`)}
        ${panel('p2', html`参数<i class="dd"></i>`, big(rFx, ['参数'], 'w36'))}
        ${panel('p3', '样式和标准', html`
          ${big(rStyle, ['样式编辑器'], 'w60')}
          <div class="col">${small(sSave, '保存')}${small(sRefresh, '更新')}${small(sClear, '清除')}</div>`)}
        ${panel('p4', '插入', html`
          ${big(rDerive, ['衍生'], 'w32')}
          <div class="col c66">${small(sFeature, '特征')}${small(sObject, '插入对象')}${small(sImport, '导入')}</div>
          <div class="col">
            ${small(sIFeat, '插入 iFeature', 'ind')}
            <div class="combo">${ic(sAngle)}<span>Angle_equal</span><i class="dd"></i></div>
          </div>`)}
        ${panel('p5', '点云', html`
          ${big(rRecap, ['Autodesk', 'ReCap'], 'w50')}
          ${big(rAttach, ['附着'], 'w36')}
          <div class="col off">${small(sCrop, '框修剪', '', true)}${small(sNav, '导航器')}${small(sCloud, '云点', '', true)}</div>`)}
        ${panel('p6', '布局', html`
          <div class="off">${big(rGenPart, ['生成零件'], 'w48')}</div>
          <div class="off">${big(rGenComp, ['生成零部件'], 'w60')}</div>`)}
        ${panel('p7', '编写', html`
          ${big(rIPart, ['创建', 'iPart'], 'w30')}
          <div class="col c117">
            ${small(sIMate, 'iMate', 'ind')}
            ${small(sExport, '导出对象', 'ind')}
            <div class="hlwrap">${small(sFactory, '编辑工厂 范围', 'hl')}<i class="dd"></i></div>
          </div>
          <div class="col">${small(sIFeat, '提取 iFeature')}${small(sStruct, '结构形状', '', true)}</div>`)}
        ${panel('p8', html`iLogic<i class="dd"></i>`, html`
          ${big(rScroll, ['添加规则'], 'w48')}
          <div class="col">${small(sLogicB, 'iLogic 浏览器')}${small(sEvent, '事件触发器')}${small(sTrigger, 'iTrigger')}</div>`)}
        ${panel('p9', '资源中心', html`
          ${big(rBook, ['编辑器'], 'w36')}
          <div class="col">${small(sPubF, '发布特征')}${small(sPubP, '发布零件')}${small(sPubB, '批量发布')}</div>`)}
      </div>

      <main class="main">
        <aside class="browser">
          <div class="bhead">
            <div class="btab"><span>模型</span>${ic(svg`<path d="M4 4l8 8M12 4l-8 8" stroke="#444" stroke-width="1.200"/>`)}</div>
            <div class="b">${ic(svg`<path d="M8 4v8M4 8h8" stroke="#eee" stroke-width="2"/>`)}</div>
            <div class="b bsearch">${ic(svg`<circle cx="7" cy="7" r="4.800" fill="none" stroke="#c8c8c8" stroke-width="1.200"/><path d="M10.500 10.500l4 4" stroke="#c8c8c8" stroke-width="1.200"/>`)}</div>
            <div class="b">${ic(svg`<path d="M2 3.500h12M2 8h12M2 12.500h12" stroke="#c8c8c8"/>`)}</div>
          </div>
          <div class="tree">
            <div class="list">
              <div class="node root">${ic(nRoot)}<span class="label-t">${runs('GB / T 7810-2017 UCP')}</span></div>
              ${rows.map(([icon, label, chev]) => html`<div class="node">
                <div class="hook">${chev ? html`<i class="chev"></i>` : ''}</div>
                ${ic(icon)}<span class="label-t">${runs(label)}</span>
              </div>`)}
            </div>
            <div class="sb">
              <div class="sbarrow"><i class="up"></i></div>
              <div class="thumb"><div class="grip"></div></div>
              <div class="sbspace"></div>
              <div class="sbarrow"><i class="down"></i></div>
            </div>
          </div>
          <div class="cursor">${ic(svg`
            <path d="M1 1v15l4-3.500 3 6 2.500-1.200-3-5.800h5z" fill="#fff" stroke="#111"/>
            <path d="M13.500 2h9v1.500l-3.500 5 3.500 5v2h-9v-2l3.500-5-3.500-5z" fill="#fff" stroke="#111"/>
            <path d="M15 14h6l-3-3.500zM16 4h4l-2 3z" fill="#111"/>`, 24, 24)}</div>
        </aside>

        <div class="view">
          <svg class="model" width="1159" height="689" viewBox="272 136 1159 689">${model}</svg>

          <div class="vctl">
            <div class="b">${ic(svg`<path d="M1 8h12" stroke="#ddd" stroke-width="2.500"/>`)}</div>
            <div class="b">${ic(svg`<path d="M3 3h10v10H3z" fill="none" stroke="#ddd" stroke-width="1.500"/><path d="M6 6h4v4H6z" fill="none" stroke="#ddd"/>`)}</div>
            <div class="b">${ic(svg`<path d="M3 3l10 10M13 3L3 13" stroke="#ddd" stroke-width="2"/>`)}</div>
          </div>

          <svg class="cube" width="72" height="72" viewBox="0 0 72 72">
            <defs>
              <linearGradient id="cb" x1="0" y1="0" x2="0" y2="1"><stop offset="0" stop-color="#6e6e6e"/><stop offset="1" stop-color="#4f4f4f"/></linearGradient>
            </defs>
            <path d="M37 1L1 8 4 51 31 69 68 51 70 10z" fill="url(#cb)"/>
            <path d="M30 20V69M30 20L1 8M30 20L70 10" stroke="#5c5c5c" fill="none"/>
            <text class="cubetxt" transform="translate(7 44) skewY(18)">前</text>
            <text class="cubetxt" transform="translate(40 52) skewY(-18)">右</text>
          </svg>

          <div class="nav">
            <div class="nav-x">${ic(svg`<circle cx="4.500" cy="4.500" r="4" fill="#333"/><path d="M3 3l3 3M6 3L3 6" stroke="#ccc"/>`, 9, 9)}</div>
            <div class="nav-wheel">${ic(svg`<rect x="1" y="1" width="20" height="20" rx="7" fill="#b0b0b0"/><circle cx="11" cy="11" r="7" fill="#8a8a8a" stroke="#666"/>`, 22, 22)}</div>
            <div class="nav-line"></div>
            ${ic(svg`<path d="M4 13l-3-4 2-1 3 2V2h2v6l1-7h2l0 7 2-6h2l-1 7 3-3 1 1-4 8-2 4H8z" fill="#b6b6b6"/>`, 22, 22)}
            <div class="nav-zoom">${ic(svg`<path d="M1 1h15v15H1z" fill="none" stroke="#333"/><circle cx="16" cy="15" r="4" fill="#9aa4a4"/><path d="M18 18l4 4" stroke="#777" stroke-width="1.500"/>`, 22, 22)}</div>
            <div class="nav-orbit">${ic(svg`<ellipse cx="11" cy="11" rx="10" ry="5" fill="none" stroke="#383838"/><ellipse cx="11" cy="11" rx="5" ry="10" fill="none" stroke="#383838"/><path d="M11 2l6 8-6 2z" fill="#3c3c3c"/>`, 22, 22)}</div>
            <div class="nav-film">${ic(svg`<path d="M1 5l14-4v4zM1 6h20v14H1z" fill="#b4b4b4"/><path d="M4 10h14v7H4z" fill="#7d8488" stroke="#555"/>`, 22, 22)}</div>
            <div class="nav-bot">${ic(svg`<circle cx="4.500" cy="4.500" r="4" fill="#333"/><path d="M2.500 3h4M2.500 4.500h4M3.500 6h2" stroke="#ccc" stroke-width=".8"/>`, 9, 9)}</div>
          </div>

          <div class="mark">${runs('UG爱好者论坛@13218382397')}</div>
        </div>
      </main>
    `;
  }
}
